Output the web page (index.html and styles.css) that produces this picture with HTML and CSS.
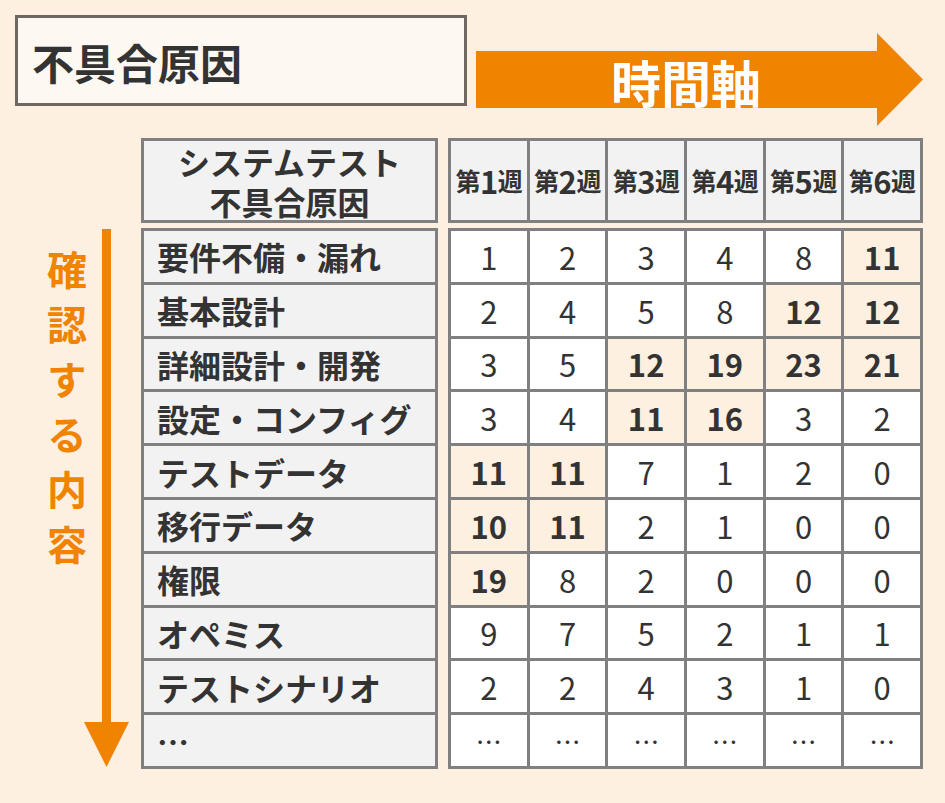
FILE: index.html
```html
<!DOCTYPE html>
<html lang="ja">
<head>
<meta charset="utf-8">
<link rel="stylesheet" href="styles.css">
</head>
<body>
<div class="top">
  <div class="title-box">不具合原因</div>
  <div class="time-arrow"><span class="time-label">時間軸</span></div>
</div>
<div class="main">
  <div class="side-empty"></div>
  <div class="label-head">システムテスト<br>不具合原因</div>
  <div class="week-head">
    <div class="wh">第<span class="wn">1</span>週</div>
    <div class="wh">第<span class="wn">2</span>週</div>
    <div class="wh">第<span class="wn">3</span>週</div>
    <div class="wh">第<span class="wn">4</span>週</div>
    <div class="wh">第<span class="wn">5</span>週</div>
    <div class="wh">第<span class="wn">6</span>週</div>
  </div>
  <div class="side">
    <div class="side-text">確認する内容</div>
    <svg class="down-arrow" width="45" height="538" viewBox="0 0 45 538">
      <rect x="18" y="0" width="9" height="494" fill="#f08300"/>
      <polygon points="0,493 45,493 22.5,538" fill="#f08300"/>
    </svg>
  </div>
  <div class="labels">
    <div class="lc">要件不備・漏れ</div>
    <div class="lc">基本設計</div>
    <div class="lc">詳細設計・開発</div>
    <div class="lc">設定・コンフィグ</div>
    <div class="lc">テストデータ</div>
    <div class="lc">移行データ</div>
    <div class="lc">権限</div>
    <div class="lc">オペミス</div>
    <div class="lc">テストシナリオ</div>
    <div class="lc">…</div>
  </div>
  <div class="values">
    <div class="c">1</div><div class="c">2</div><div class="c">3</div><div class="c">4</div><div class="c">8</div><div class="c hi">11</div>
    <div class="c">2</div><div class="c">4</div><div class="c">5</div><div class="c">8</div><div class="c hi">12</div><div class="c hi">12</div>
    <div class="c">3</div><div class="c">5</div><div class="c hi">12</div><div class="c hi">19</div><div class="c hi">23</div><div class="c hi">21</div>
    <div class="c">3</div><div class="c">4</div><div class="c hi">11</div><div class="c hi">16</div><div class="c">3</div><div class="c">2</div>
    <div class="c hi">11</div><div class="c hi">11</div><div class="c">7</div><div class="c">1</div><div class="c">2</div><div class="c">0</div>
    <div class="c hi">10</div><div class="c hi">11</div><div class="c">2</div><div class="c">1</div><div class="c">0</div><div class="c">0</div>
    <div class="c hi">19</div><div class="c">8</div><div class="c">2</div><div class="c">0</div><div class="c">0</div><div class="c">0</div>
    <div class="c">9</div><div class="c">7</div><div class="c">5</div><div class="c">2</div><div class="c">1</div><div class="c">1</div>
    <div class="c">2</div><div class="c">2</div><div class="c">4</div><div class="c">3</div><div class="c">1</div><div class="c">0</div>
    <div class="c dots">…</div><div class="c dots">…</div><div class="c dots">…</div><div class="c dots">…</div><div class="c dots">…</div><div class="c dots">…</div>
  </div>
</div>
</body>
</html>
```
FILE: styles.css
```css
html, body {
  margin: 0;
  padding: 0;
}
body {
  background: #fdf0e1;
  width: 945px;
  height: 803px;
  overflow: hidden;
  font-family: "Noto Sans CJK JP", "Noto Sans", sans-serif;
  color: #333333;
}
.top {
  display: flex;
  align-items: flex-start;
  padding: 15px 0 0 15px;
  height: 111px;
}
.title-box {
  box-sizing: border-box;
  width: 452px;
  height: 91px;
  border: 3px solid #6f6860;
  background: #fdf8f1;
  font-size: 42px;
  font-weight: 700;
  line-height: 1;
  display: flex;
  align-items: center;
  padding-left: 14px;
  padding-top: 2px;
  color: #333333;
}
.time-arrow {
  margin-left: 9px;
  margin-top: 18px;
  width: 447px;
  height: 93px;
  background: #f08300;
  clip-path: polygon(0 18px, 401px 18px, 401px 0, 447px 46.5px, 401px 93px, 401px 75px, 0 75px);
  display: flex;
  align-items: center;
}
.time-label {
  width: 420px;
  text-align: center;
  color: #ffffff;
  font-size: 50px;
  font-weight: 700;
  line-height: 1;
  padding-top: 2px;
}
.main {
  margin-top: 12px;
  display: grid;
  grid-template-columns: 131px 297px 475px;
  grid-template-rows: 85px 541px;
  column-gap: 10px;
  row-gap: 5px;
}
.label-head {
  box-sizing: border-box;
  border: 3px solid #808080;
  background: #f2f2f2;
  font-size: 32px;
  font-weight: 700;
  line-height: 40px;
  text-align: center;
  padding-top: 0px;
  display: flex;
  align-items: center;
  justify-content: center;
}
.week-head {
  display: grid;
  grid-template-columns: repeat(6, 1fr);
  gap: 3px;
  padding: 3px;
  background: #808080;
}
.wh {
  background: #f2f2f2;
  display: flex;
  align-items: center;
  justify-content: center;
  font-size: 25px;
  font-weight: 700;
  line-height: 1;
  white-space: nowrap;
  letter-spacing: -0.5px;
}
.wn {
  font-size: 31px;
}
.side {
  display: flex;
  align-items: flex-start;
  padding-left: 47px;
  padding-top: 1px;
}
.side-text {
  writing-mode: vertical-rl;
  font-size: 40px;
  line-height: 40px;
  width: 40px;
  letter-spacing: 15px;
  font-weight: 700;
  color: #f08300;
  margin-top: 21px;
}
.down-arrow {
  display: block;
  margin-left: -3px;
}
.labels {
  display: grid;
  grid-template-rows: repeat(10, 1fr);
  gap: 3px;
  padding: 3px;
  background: #808080;
}
.lc {
  background: #f2f2f2;
  font-size: 32px;
  font-weight: 700;
  line-height: 1;
  display: flex;
  align-items: center;
  padding-left: 13px;
  white-space: nowrap;
}
.values {
  display: grid;
  grid-template-columns: repeat(6, 1fr);
  grid-template-rows: repeat(10, 1fr);
  gap: 3px;
  padding: 3px;
  background: #808080;
}
.c {
  background: #ffffff;
  display: flex;
  align-items: center;
  justify-content: center;
  font-size: 31px;
  font-weight: 400;
  line-height: 1;
}
.c.hi {
  background: #fdf0e1;
  font-weight: 700;
}
.c.dots {
  font-size: 26px;
}
```
